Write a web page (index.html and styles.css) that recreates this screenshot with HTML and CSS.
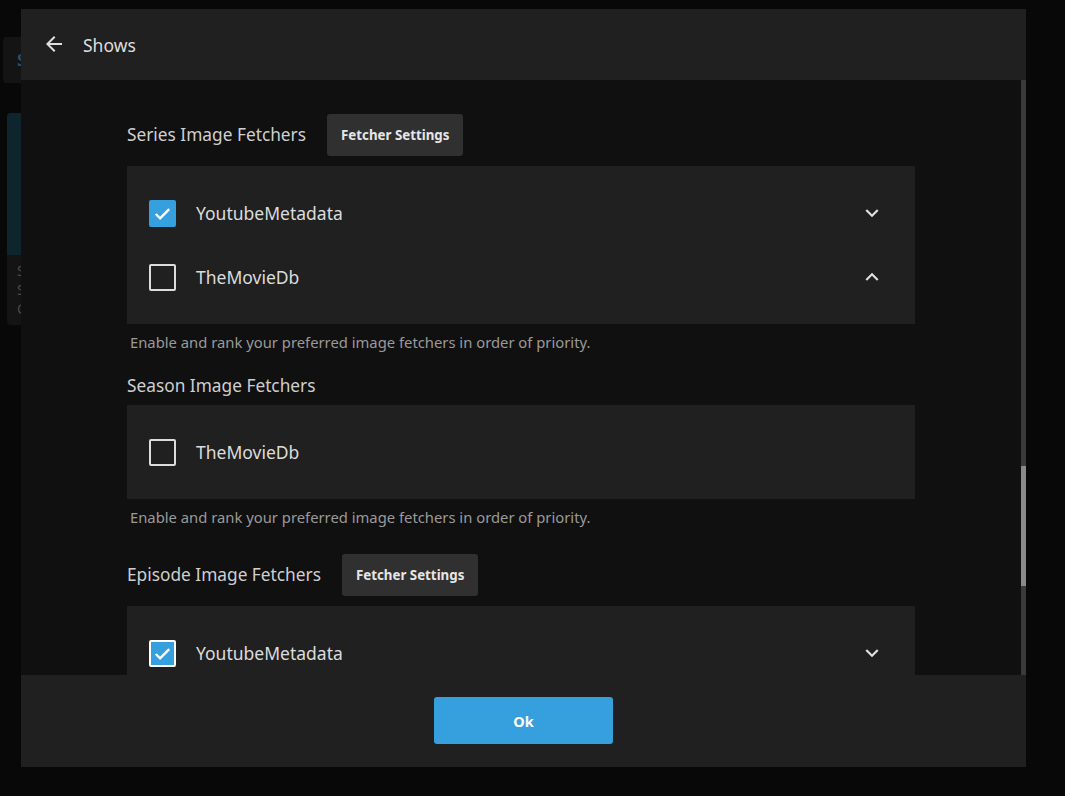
FILE: index.html
```html
<!DOCTYPE html>
<html lang="en">
<head>
  <meta charset="UTF-8" />
  <meta name="viewport" content="width=device-width, initial-scale=1.0"/>
  <title>Shows</title>
  <link rel="stylesheet" href="styles.css">
</head>
<body>
  <!-- page behind the dialog -->
  <div class="page">
    <div class="page-tabs"><span class="page-tab-text">Shows</span></div>
    <div class="page-card">
      <div class="page-card-image"></div>
      <div class="page-card-text">
        <p>Shows</p>
        <p>Shows</p>
        <p>Collections</p>
      </div>
    </div>
  </div>

  <div class="dialog">
    <div class="dialog-header">
      <button class="icon-button back-button" title="Back">
        <svg viewBox="0 0 24 24" width="24" height="24"><path d="M20 11H7.83l5.59-5.59L12 4l-8 8 8 8 1.41-1.41L7.83 13H20v-2z" fill="currentColor"/></svg>
      </button>
      <h3 class="dialog-title">Shows</h3>
    </div>

    <div class="dialog-body">
      <div class="dialog-content">
        <div class="form">

          <div class="section">
            <div class="section-head with-button">
              <h3 class="list-label">Series Image Fetchers</h3>
              <button class="raised-button">Fetcher Settings</button>
            </div>
            <div class="checkbox-list">
              <div class="list-item">
                <span class="checkbox checked"><svg viewBox="0 0 24 24" width="23" height="23"><path d="M5 12.5l4.5 4.5L19 7.5" fill="none" stroke="#fff" stroke-width="2.5"/></svg></span>
                <span class="item-name">YoutubeMetadata</span>
                <button class="icon-button move-button">
                  <svg viewBox="0 0 24 24" width="26" height="26"><path d="M7.41 8.59L12 13.17l4.59-4.58L18 10l-6 6-6-6 1.41-1.41z" fill="currentColor"/></svg>
                </button>
              </div>
              <div class="list-item">
                <span class="checkbox"></span>
                <span class="item-name">TheMovieDb</span>
                <button class="icon-button move-button">
                  <svg viewBox="0 0 24 24" width="26" height="26"><path d="M7.41 15.41L12 10.83l4.59 4.58L18 14l-6-6-6 6z" fill="currentColor"/></svg>
                </button>
              </div>
            </div>
            <div class="field-description">Enable and rank your preferred image fetchers in order of priority.</div>
          </div>

          <div class="section">
            <div class="section-head">
              <h3 class="list-label">Season Image Fetchers</h3>
            </div>
            <div class="checkbox-list">
              <div class="list-item">
                <span class="checkbox"></span>
                <span class="item-name">TheMovieDb</span>
              </div>
            </div>
            <div class="field-description">Enable and rank your preferred image fetchers in order of priority.</div>
          </div>

          <div class="section">
            <div class="section-head with-button">
              <h3 class="list-label">Episode Image Fetchers</h3>
              <button class="raised-button">Fetcher Settings</button>
            </div>
            <div class="checkbox-list">
              <div class="list-item">
                <span class="checkbox checked focused"><svg viewBox="0 0 24 24" width="23" height="23"><path d="M5 12.5l4.5 4.5L19 7.5" fill="none" stroke="#fff" stroke-width="2.5"/></svg></span>
                <span class="item-name">YoutubeMetadata</span>
                <button class="icon-button move-button">
                  <svg viewBox="0 0 24 24" width="26" height="26"><path d="M7.41 8.59L12 13.17l4.59-4.58L18 10l-6 6-6-6 1.41-1.41z" fill="currentColor"/></svg>
                </button>
              </div>
            </div>
          </div>

        </div>
      </div>
      <div class="scrollbar"><div class="scrollbar-thumb"></div></div>
    </div>

    <div class="dialog-footer">
      <button class="ok-button">Ok</button>
    </div>
  </div>
</body>
</html>
```

FILE: styles.css
```css
body {
  font-family: "Noto Sans", "Open Sans", sans-serif;
  margin: 0; padding: 0;
  background-color: #080808;
  width: 1065px; height: 796px;
  overflow: hidden;
  position: relative;
}
button {
  font-family: inherit;
}

/* page behind */
.page {
  padding-top: 37px;
}
.page-tabs {
  margin-left: 3px;
  width: 200px; height: 46px;
  background: #141414;
  border-radius: 4px;
  display: flex; align-items: center;
  padding-left: 14px;
  box-sizing: border-box;
}
.page-tab-text {
  color: #2b4d6b;
  font-size: 16px;
  font-weight: bold;
}
.page-card {
  margin: 30px 0 0 7px;
  width: 180px; height: 212px;
  background: #141414;
  border-radius: 4px;
  overflow: hidden;
}
.page-card-image {
  height: 142px;
  background: #0e252e;
}
.page-card-text {
  padding: 6px 0 0 10px;
  color: #4a4a4a;
  font-size: 14px;
}
.page-card-text p {
  margin: 0;
  line-height: 19px;
}

/* dialog */
.dialog {
  position: absolute;
  left: 21px; top: 9px;
  width: 1005px; height: 758px;
  display: flex;
  flex-direction: column;
  background: #101010;
}
.dialog-header {
  height: 71px;
  flex: none;
  background: #202020;
  display: flex;
  align-items: center;
  padding-left: 13px;
}
.icon-button {
  background: none; border: none;
  color: #e0e0e0;
  padding: 0; margin: 0;
  display: flex; align-items: center; justify-content: center;
  cursor: pointer;
}
.back-button {
  width: 40px; height: 40px;
  margin-top: -2px;
}
.dialog-title {
  margin: 0 0 0 9px;
  font-size: 17.5px;
  font-weight: normal;
  color: #dedede;
}
.dialog-body {
  flex: 1;
  display: flex;
  min-height: 0;
}
.dialog-content {
  flex: 1;
  overflow: hidden;
}
.scrollbar {
  width: 5px;
  background: #3a3a3a;
  flex: none;
  padding-top: 386px;
  box-sizing: border-box;
}
.scrollbar-thumb {
  height: 120px;
  background: #8a8a8a;
}
.form {
  width: 788px;
  margin: 0 auto;
  padding-top: 28px;
}
.section {
  display: flow-root;
  margin-bottom: 21px;
}
.section-head {
  display: flex;
  align-items: center;
  height: 24px;
  margin-bottom: 8px;
}
.section-head.with-button {
  height: 43px;
  margin-top: 5px;
  margin-bottom: 10px;
}
.list-label {
  margin: 0;
  font-size: 17.3px;
  font-weight: normal;
  color: #cfcfcf;
}
.raised-button {
  margin-left: 21px;
  height: 42px;
  padding: 0 14px;
  background: #303030;
  border: none;
  border-radius: 3px;
  color: #e6e6e6;
  font-size: 13.3px;
  font-weight: bold;
}
.checkbox-list {
  background: #202020;
  padding: 15px 0;
}
.list-item {
  height: 64px;
  display: flex;
  align-items: center;
  padding-left: 22px;
}
.checkbox {
  width: 27px; height: 27px;
  box-sizing: border-box;
  border: 2px solid #dcdcdc;
  border-radius: 2px;
  display: flex; align-items: center; justify-content: center;
  flex: none;
}
.checkbox.checked {
  background: #369fdd;
  border-color: #369fdd;
}
.checkbox.checked.focused {
  border-color: #fff;
}
.item-name {
  margin-left: 20px;
  font-size: 17.5px;
  color: #dcdcdc;
  flex: 1;
}
.move-button {
  width: 40px; height: 40px;
  margin-right: 23px;
}
.field-description {
  margin-top: 8px;
  padding-left: 3px;
  font-size: 14.8px;
  line-height: 20px;
  color: #9a9a9a;
}

/* footer */
.dialog-footer {
  height: 92px;
  flex: none;
  background: #202020;
  display: flex;
  justify-content: center;
  padding-top: 22px;
  box-sizing: border-box;
}
.ok-button {
  width: 179px; height: 47px;
  background: #369fdd;
  border: none;
  border-radius: 3px;
  color: #fff;
  font-size: 14.5px;
  font-weight: bold;
}
```
